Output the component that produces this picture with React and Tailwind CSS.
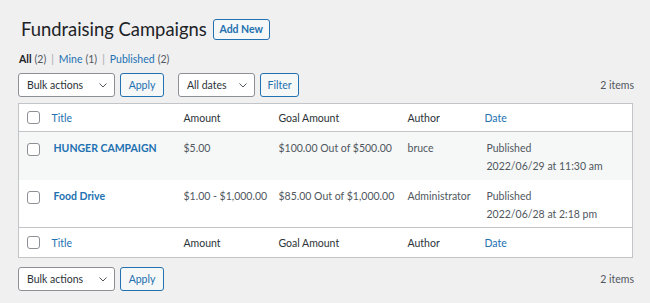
import React from "react";

const Checkbox = () => (
  <span className="block w-[13px] h-[13px] rounded-[3px] border border-[#8c8f94] bg-white" />
);

const Select = ({ label, width }) => (
  <div
    className={`${width} h-[24px] flex items-center justify-between pl-[8px] pr-[6px] bg-white border border-[#8c8f94] rounded-[3px] text-[#2c3338]`}
  >
    <span>{label}</span>
    <svg width="10" height="10" viewBox="0 0 20 20" fill="none" stroke="#50575e" strokeWidth="2">
      <path d="M3 7l7 7 7-7" />
    </svg>
  </div>
);

const Button = ({ children, width }) => (
  <div
    className={`${width} h-[24px] flex items-center justify-center bg-[#f6f7f7] border border-[#2271b1] rounded-[3px] text-[#2271b1]`}
  >
    {children}
  </div>
);

const HeaderRow = ({ top }) => (
  <tr className={top ? "h-[28px] border-b border-[#c3c4c7]" : "h-[30px] border-t border-[#c3c4c7]"}>
    <th className="pl-[8px] align-middle">
      <Checkbox />
    </th>
    <th className="px-[7px] text-left font-normal text-[#2271b1]">Title</th>
    <th className="px-[7px] text-left font-normal">Amount</th>
    <th className="px-[7px] text-left font-normal">Goal Amount</th>
    <th className="px-[7px] text-left font-normal">Author</th>
    <th className="px-[7px] text-left font-normal text-[#2271b1]">Date</th>
  </tr>
);

const rows = [
  {
    title: "HUNGER CAMPAIGN",
    amount: "$5.00",
    goal: "$100.00 Out of $500.00",
    author: "bruce",
    date: "2022/06/29 at 11:30 am",
    bg: "bg-[#f6f7f7]",
    h: "h-[48px]",
  },
  {
    title: "Food Drive",
    amount: "$1.00 - $1,000.00",
    goal: "$85.00 Out of $1,000.00",
    author: "Administrator",
    date: "2022/06/28 at 2:18 pm",
    bg: "bg-white",
    h: "h-[48px]",
  },
];

export default function App() {
  return (
    <div
      className="w-[650px] h-[303px] bg-[#f0f0f1] text-[10.5px] leading-[18px] text-[#2c3338] overflow-hidden"
      style={{ fontFamily: 'Lato, "Open Sans", sans-serif' }}
    >
      <div className="pl-[18px] pr-[16px]">
        <div className="flex items-center pt-[15px] h-[43px]">
          <h1 className="ml-[3px] text-[18.4px] leading-[26px] text-[#1d2327] font-normal">
            Fundraising Campaigns
          </h1>
          <div className="ml-[6px] h-[21px] w-[57px] flex items-center justify-center border border-[#2271b1] rounded-[3px] bg-[#f6f7f7] text-[#2271b1] text-[10.5px] font-bold">
            Add New
          </div>
        </div>

        <div className="mt-[7px] ml-[1px] h-[18px] flex items-center text-[10.5px] text-[#50575e]">
          <span className="text-[#1d2327] font-bold">All</span>
          <span className="ml-[3px]">(2)</span>
          <span className="mx-[5px] text-[#a7aaad]">|</span>
          <span className="text-[#2271b1]">Mine</span>
          <span className="ml-[3px]">(1)</span>
          <span className="mx-[5px] text-[#a7aaad]">|</span>
          <span className="text-[#2271b1]">Published</span>
          <span className="ml-[3px]">(2)</span>
        </div>

        <div className="mt-[5px] flex items-center">
          <Select label="Bulk actions" width="w-[97px]" />
          <div className="ml-[5px]">
            <Button width="w-[44px]">Apply</Button>
          </div>
          <div className="ml-[14px]">
            <Select label="All dates" width="w-[77px]" />
          </div>
          <div className="ml-[5px]">
            <Button width="w-[39px]">Filter</Button>
          </div>
          <span className="ml-auto text-[#50575e]">2 items</span>
        </div>

        <table className="mt-[6px] w-[615px] table-fixed border border-[#c3c4c7] bg-white border-collapse whitespace-nowrap">
          <colgroup>
            <col className="w-[26px]" />
            <col className="w-[132px]" />
            <col className="w-[95px]" />
            <col className="w-[129px]" />
            <col className="w-[77px]" />
            <col />
          </colgroup>
          <thead>
            <HeaderRow top />
          </thead>
          <tbody>
            {rows.map((r) => (
              <tr key={r.title} className={`${r.bg} ${r.h} align-top text-[#50575e]`}>
                <td className="pl-[8px] pt-[11px]">
                  <Checkbox />
                </td>
                <td className="px-[7px] pt-[7px] pl-[9px] font-bold text-[#2271b1]">{r.title}</td>
                <td className="px-[7px] pt-[7px]">{r.amount}</td>
                <td className="px-[7px] pt-[7px]">{r.goal}</td>
                <td className="px-[7px] pt-[7px]">{r.author}</td>
                <td className="px-[7px] pt-[7px] pl-[9px]">
                  <div>Published</div>
                  <div>{r.date}</div>
                </td>
              </tr>
            ))}
          </tbody>
          <tfoot>
            <HeaderRow />
          </tfoot>
        </table>

        <div className="mt-[9px] flex items-center">
          <Select label="Bulk actions" width="w-[97px]" />
          <div className="ml-[5px]">
            <Button width="w-[44px]">Apply</Button>
          </div>
          <span className="ml-auto text-[#50575e]">2 items</span>
        </div>
      </div>
    </div>
  );
}
